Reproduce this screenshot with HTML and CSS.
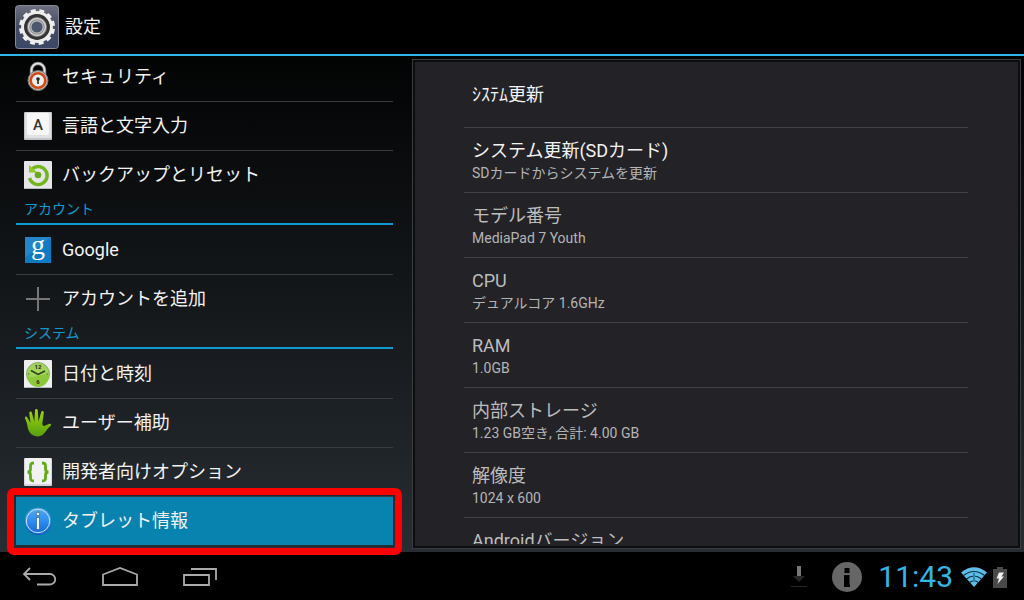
FILE: index.html
```html
<!DOCTYPE html>
<html lang="ja">
<head>
  <meta charset="UTF-8">
  <title>設定</title>
  <meta name="viewport" content="width=device-width, initial-scale=1.0">
  <link rel="stylesheet" href="styles.css">
</head>
<body>
  <header class="action-bar">
    <svg class="app-icon" viewBox="0 0 44 44">
      <defs>
        <linearGradient id="tile" x1="0" y1="0" x2="0" y2="1">
          <stop offset="0" stop-color="#6c6f80"/>
          <stop offset="0.5" stop-color="#454b61"/>
          <stop offset="1" stop-color="#3a4867"/>
        </linearGradient>
      </defs>
      <rect x="0.5" y="0.5" width="43" height="43" rx="3" fill="url(#tile)" stroke="#858997"/>
      <circle cx="22" cy="22" r="16" fill="none" stroke="#f1f1f1" stroke-width="4" stroke-dasharray="4.8 3.578" stroke-dashoffset="-1.8"/>
      <circle cx="22" cy="22" r="14.2" fill="none" stroke="#ededed" stroke-width="3.4"/>
      <circle cx="22" cy="22" r="11.2" fill="none" stroke="#343434" stroke-width="3.4"/>
      <circle cx="22" cy="22" r="8" fill="#4c5670" stroke="#8b8b8b" stroke-width="4"/>
      <circle cx="22" cy="22" r="8.4" fill="none" stroke="#ddd" stroke-width="1.2"/>
      <circle cx="22" cy="22" r="6.2" fill="none" stroke="#bbb" stroke-width="1.2"/>
    </svg>
    <h1>設定</h1>
  </header>

  <main class="content">
    <nav class="menu">
      <a class="item" href="#security">
        <svg class="icon" viewBox="0 0 28 28">
          <path d="M7.500 12V7a6.500 6.500 0 0 1 13 0V12" fill="none" stroke="#8a8a8a" stroke-width="3.400"/>
          <path d="M7.500 12V7a6.500 6.500 0 0 1 13 0V12" fill="none" stroke="#e6e6e6" stroke-width="1.600"/>
          <circle cx="14" cy="17.500" r="10" fill="#b9b9b9" stroke="#777"/>
          <circle cx="14" cy="17.500" r="7.300" fill="#eee" stroke="#d24a16" stroke-width="2.600"/>
          <circle cx="14" cy="16" r="1.800" fill="#222"/>
          <path d="M13.200 16h1.600v5h-1.600z" fill="#222"/>
        </svg>
        <span>セキュリティ</span>
      </a>
      <a class="item" href="#language">
        <svg class="icon" viewBox="0 0 28 28">
          <rect width="28" height="28" rx="1" fill="#c4c4cb"/>
          <rect x="1" y="0.500" width="26" height="25.500" rx="1" fill="#e1e1e4"/>
          <rect x="3" y="1" width="22" height="22" rx="2" fill="#f7f7f8"/>
          <text class="key" x="14" y="17.500">A</text>
        </svg>
        <span>言語と文字入力</span>
      </a>
      <a class="item" href="#backup">
        <svg class="icon" viewBox="0 0 28 28">
          <rect width="28" height="28" rx="1" fill="#e6e6ea"/>
          <rect y="27" width="28" height="1" fill="#b8b8be"/>
          <path d="M8.200 7.800A9 9 0 1 1 5.500 17" fill="none" stroke="#72b51c" stroke-width="3.400"/>
          <path d="M5 4v7.500h8.500z" fill="#8fcb20"/>
          <circle cx="14" cy="14" r="3.300" fill="#65aa1c"/>
        </svg>
        <span>バックアップとリセット</span>
      </a>

      <h2>アカウント</h2>
      <a class="item" href="#google">
        <svg class="icon" viewBox="0 0 28 28">
          <rect x="1" y="1" width="26" height="26" fill="#0d7cc4"/>
          <path d="M1 1h26L1 22z" fill="#2386c9"/>
          <text class="letter-g" x="14" y="18">g</text>
        </svg>
        <span>Google</span>
      </a>
      <a class="item" href="#add-account">
        <svg class="icon" viewBox="0 0 28 28">
          <path d="M14 2v24M2 14h24" stroke="#777" stroke-width="2"/>
        </svg>
        <span>アカウントを追加</span>
      </a>

      <h2>システム</h2>
      <a class="item" href="#date">
        <svg class="icon" viewBox="0 0 28 28">
          <rect width="28" height="28" rx="1" fill="#eeeef1"/>
          <rect y="27" width="28" height="1" fill="#b8b8be"/>
          <circle cx="14" cy="14" r="11.500" fill="#a2d45b" stroke="#86a960"/>
          <path d="M3 16a11 11 0 0 0 22 0C20 11 9 20 3 16z" fill="#8cc83a"/>
          <path d="M7 10.500l7 4 7-3.500" fill="none" stroke="#29401a" stroke-width="1.500"/>
          <path d="M4 14h1.500M22.500 14H24" stroke="#4b6a30"/>
          <text class="hour" x="14" y="8.500">12</text>
          <text class="hour" x="14" y="24">6</text>
        </svg>
        <span>日付と時刻</span>
      </a>
      <a class="item" href="#accessibility">
        <svg class="icon" viewBox="0 0 28 28">
          <defs>
            <linearGradient id="hand" x1="0" y1="0" x2="0" y2="1">
              <stop offset="0" stop-color="#a3d60a"/>
              <stop offset="1" stop-color="#56a010"/>
            </linearGradient>
          </defs>
          <path d="M5.500 23C3.500 20 3.600 17 2.800 14L1 9.200c-.5-1.700 1.600-2.400 2.300-.8L6.500 14 5.300 4.200c-.2-2 2.200-2.300 2.600-.4l2.400 8.900L11 1.600c.1-2 2.700-2 2.800 0l.7 11L17.200 3c.5-1.800 2.800-1.300 2.600.6l-1.500 11.200c.2 2 1.500 2.600 3 1.600l4-1.600c1.700-.6 2.500 1 1.200 2.200-2.700 2-4.200 5-6.700 7.700C16 29 8.500 28 5.500 23z" fill="url(#hand)"/>
        </svg>
        <span>ユーザー補助</span>
      </a>
      <a class="item" href="#developer">
        <svg class="icon" viewBox="0 0 28 28">
          <rect width="28" height="28" rx="1" fill="#d6d6dc"/>
          <rect x="1" width="26" height="26" rx="1" fill="#f2f2f4"/>
          <path d="M10 5C7 5 6.500 6 6.500 8v3c0 2-.8 3-3 3 2.200 0 3 1 3 3v3c0 2 .5 3 3.500 3M18 5c3 0 3.500 1 3.500 3v3c0 2 .8 3 3 3-2.200 0-3 1-3 3v3c0 2-.5 3-3.500 3" fill="none" stroke="#5fac16" stroke-width="2.800"/>
        </svg>
        <span>開発者向けオプション</span>
      </a>
      <a class="item selected" href="#about" aria-current="page">
        <svg class="icon" viewBox="0 0 28 28">
          <defs>
            <linearGradient id="info" x1="0" y1="0" x2="0" y2="1">
              <stop offset="0" stop-color="#54abe8"/>
              <stop offset="0.5" stop-color="#2e8df0"/>
              <stop offset="1" stop-color="#1467d2"/>
            </linearGradient>
          </defs>
          <circle cx="14" cy="14.500" r="13.500" fill="#1457b4"/>
          <circle cx="14" cy="14" r="13.300" fill="url(#info)"/>
          <circle cx="14" cy="14" r="11.700" fill="none" stroke="#c5e2f8"/>
          <circle cx="14" cy="7" r="1.800" fill="#f2f6fa" stroke="#2c5c95" stroke-width="0.700"/>
          <path d="M12.500 10.500h3v12h-3z" fill="#f2f6fa" stroke="#2c5c95" stroke-width="0.700"/>
        </svg>
        <span>タブレット情報</span>
      </a>
    </nav>

    <section class="panel">
      <ul class="details">
        <li class="active single"><p class="title">ｼｽﾃﾑ更新</p></li>
        <li class="active"><p class="title">システム更新(SDカード)</p><p class="summary">SDカードからシステムを更新</p></li>
        <li><p class="title">モデル番号</p><p class="summary">MediaPad 7 Youth</p></li>
        <li><p class="title">CPU</p><p class="summary">デュアルコア 1.6GHz</p></li>
        <li><p class="title">RAM</p><p class="summary">1.0GB</p></li>
        <li><p class="title">内部ストレージ</p><p class="summary">1.23 GB空き, 合計: 4.00 GB</p></li>
        <li><p class="title">解像度</p><p class="summary">1024 x 600</p></li>
        <li><p class="title">Androidバージョン</p></li>
      </ul>
    </section>
  </main>

  <footer class="system-bar">
    <div class="keys">
      <button aria-label="戻る">
        <svg width="36" height="20" viewBox="0 0 36 20">
          <path d="M8 1L2 7l6 6M2 7h26a5 5 0 0 1 0 10.500H15" fill="none" stroke="#aaa" stroke-width="1.800"/>
        </svg>
      </button>
      <button aria-label="ホーム">
        <svg width="38" height="20" viewBox="0 0 38 20">
          <path d="M2 18V7.500L19 1l17 6.500V18z" fill="none" stroke="#aaa" stroke-width="1.800"/>
        </svg>
      </button>
      <button aria-label="最近使ったアプリ">
        <svg width="36" height="20" viewBox="0 0 36 20">
          <path d="M2 8h25v10H2zM9 2h25v11" fill="none" stroke="#aaa" stroke-width="1.800"/>
        </svg>
      </button>
    </div>
    <div class="status">
      <svg class="download" width="16" height="22" viewBox="0 0 16 22">
        <path d="M6 0h4v10H6z" fill="#777"/>
        <path d="M2 10h12l-6 6z" fill="#262626"/>
        <path d="M0 20.500h16" stroke="#262626"/>
      </svg>
      <svg class="notice" width="30" height="30" viewBox="0 0 30 30">
        <circle cx="15" cy="15" r="15" fill="#666"/>
        <path d="M12.500 6h5v5h-5zM12 13h5.500v9.500H18V25h-6z" fill="#000"/>
      </svg>
      <time class="clock">11:43</time>
      <svg class="wifi" width="26" height="20" viewBox="0 0 26 20">
        <path d="M0 5.500Q13-5 26 5.500L13 20z" fill="#5fbdea"/>
        <path d="M2.500 8.500q10.500-8 21 0M5.500 12q7.500-6 15 0M8.500 15.500q4.500-3.500 9 0" fill="none" stroke="#0c3040" stroke-width="1.200"/>
        <path d="M12 6h2v8h-2z" fill="#2a85ab"/>
      </svg>
      <svg width="14" height="21" viewBox="0 0 14 21">
        <path d="M4 0h6v2h4v19H0V2h4z" fill="#494949"/>
        <path d="M6 5.500h5L8.500 9.500H11L4.500 17l1.500-5.500H3.500z" fill="#f0f0f0"/>
      </svg>
    </div>
  </footer>
</body>
</html>
```
FILE: styles.css
```css
* {
  box-sizing: border-box;
}
body {
  margin: 0;
  height: 100vh;
  display: flex;
  flex-direction: column;
  overflow: hidden;
  background: #000;
  color: #f3f3f3;
  font-family: Roboto, "Noto Sans CJK JP", sans-serif;
  font-size: 18px;
}
h1, h2, p, ul {
  margin: 0;
  padding: 0;
  font-weight: normal;
}
svg {
  display: block;
}

/* top bar */
.action-bar {
  position: relative;
  z-index: 1;
  flex: none;
  display: flex;
  align-items: center;
  gap: 6px;
  height: 56px;
  padding: 0 15px;
  background: #000;
  border-bottom: 2px solid #33b5e5;
}
.app-icon {
  width: 44px;
  height: 44px;
}
h1 {
  font-size: 18px;
  line-height: 24px;
}

/* two panes */
.content {
  flex: 1;
  min-height: 0;
  display: grid;
  grid-template-columns: 13fr 21fr;
  gap: 19px;
  padding: 0 3px 0 16px;
  background: linear-gradient(#020303, #272d33);
}
.menu {
  min-height: 0;
  margin-top: -3px;
}
.item {
  position: relative;
  display: flex;
  align-items: center;
  gap: 10px;
  height: 48px;
  padding: 0 8px;
  color: inherit;
  line-height: 24px;
  text-decoration: none;
}
.item + .item {
  height: 49px;
  border-top: 1px solid #3a3d40;
}
.icon {
  width: 28px;
  height: 28px;
  overflow: visible;
}
.menu h2 {
  height: 26px;
  margin-bottom: 1px;
  padding: 0 8px;
  border-bottom: 2px solid #0f9bd0;
  color: #0f9bd0;
  font-size: 14px;
  line-height: 20px;
}
.item.selected {
  background: #0883b0;
}
/* frame that marks the selected item */
.item.selected::after {
  content: "";
  position: absolute;
  inset: -9px -9px -10px;
  border: 7px solid #f00;
  border-radius: 7px;
}
.key {
  fill: #333;
  font-size: 15px;
  font-weight: 500;
  text-anchor: middle;
}
.letter-g {
  fill: #fff;
  font-family: "Liberation Serif", serif;
  font-size: 28px;
  text-anchor: middle;
}
.hour {
  fill: #222;
  font-size: 6px;
  font-weight: bold;
  text-anchor: middle;
}

/* right pane */
.panel {
  min-height: 0;
  margin: 3px 0;
  padding: 0 52px 4px 51px;
  border: 1px solid #3a3c3f;
  outline: 2px solid #0c0d0f;
  outline-offset: -3px;
  background: #232227;
  overflow: hidden;
}
.details {
  height: 100%;
  padding-top: 3px;
  overflow: hidden;
  list-style: none;
}
.details li {
  height: 65px;
  padding: 11px 8px 0;
  border-bottom: 1px solid #434347;
  color: #bdbdbd;
}
.details .active {
  color: #f3f3f3;
}
.details .single {
  padding-top: 20px;
}
.title {
  line-height: 24px;
}
.summary {
  color: #b5b5b5;
  font-size: 14px;
  line-height: 20px;
}

/* bottom bar */
.system-bar {
  flex: none;
  display: flex;
  align-items: center;
  justify-content: space-between;
  height: 48px;
  padding: 2px 17px 0 0;
  background: #000;
}
.keys {
  display: flex;
}
.keys button {
  display: flex;
  align-items: center;
  justify-content: center;
  width: 80px;
  height: 46px;
  padding: 0;
  border: none;
  background: none;
}
.status {
  display: flex;
  align-items: center;
}
.notice {
  margin: 0 16px 0 25px;
}
.clock {
  color: #33b5e5;
  font-size: 30px;
  line-height: 40px;
}
.wifi {
  margin: 0 6px 0 8px;
}
```
